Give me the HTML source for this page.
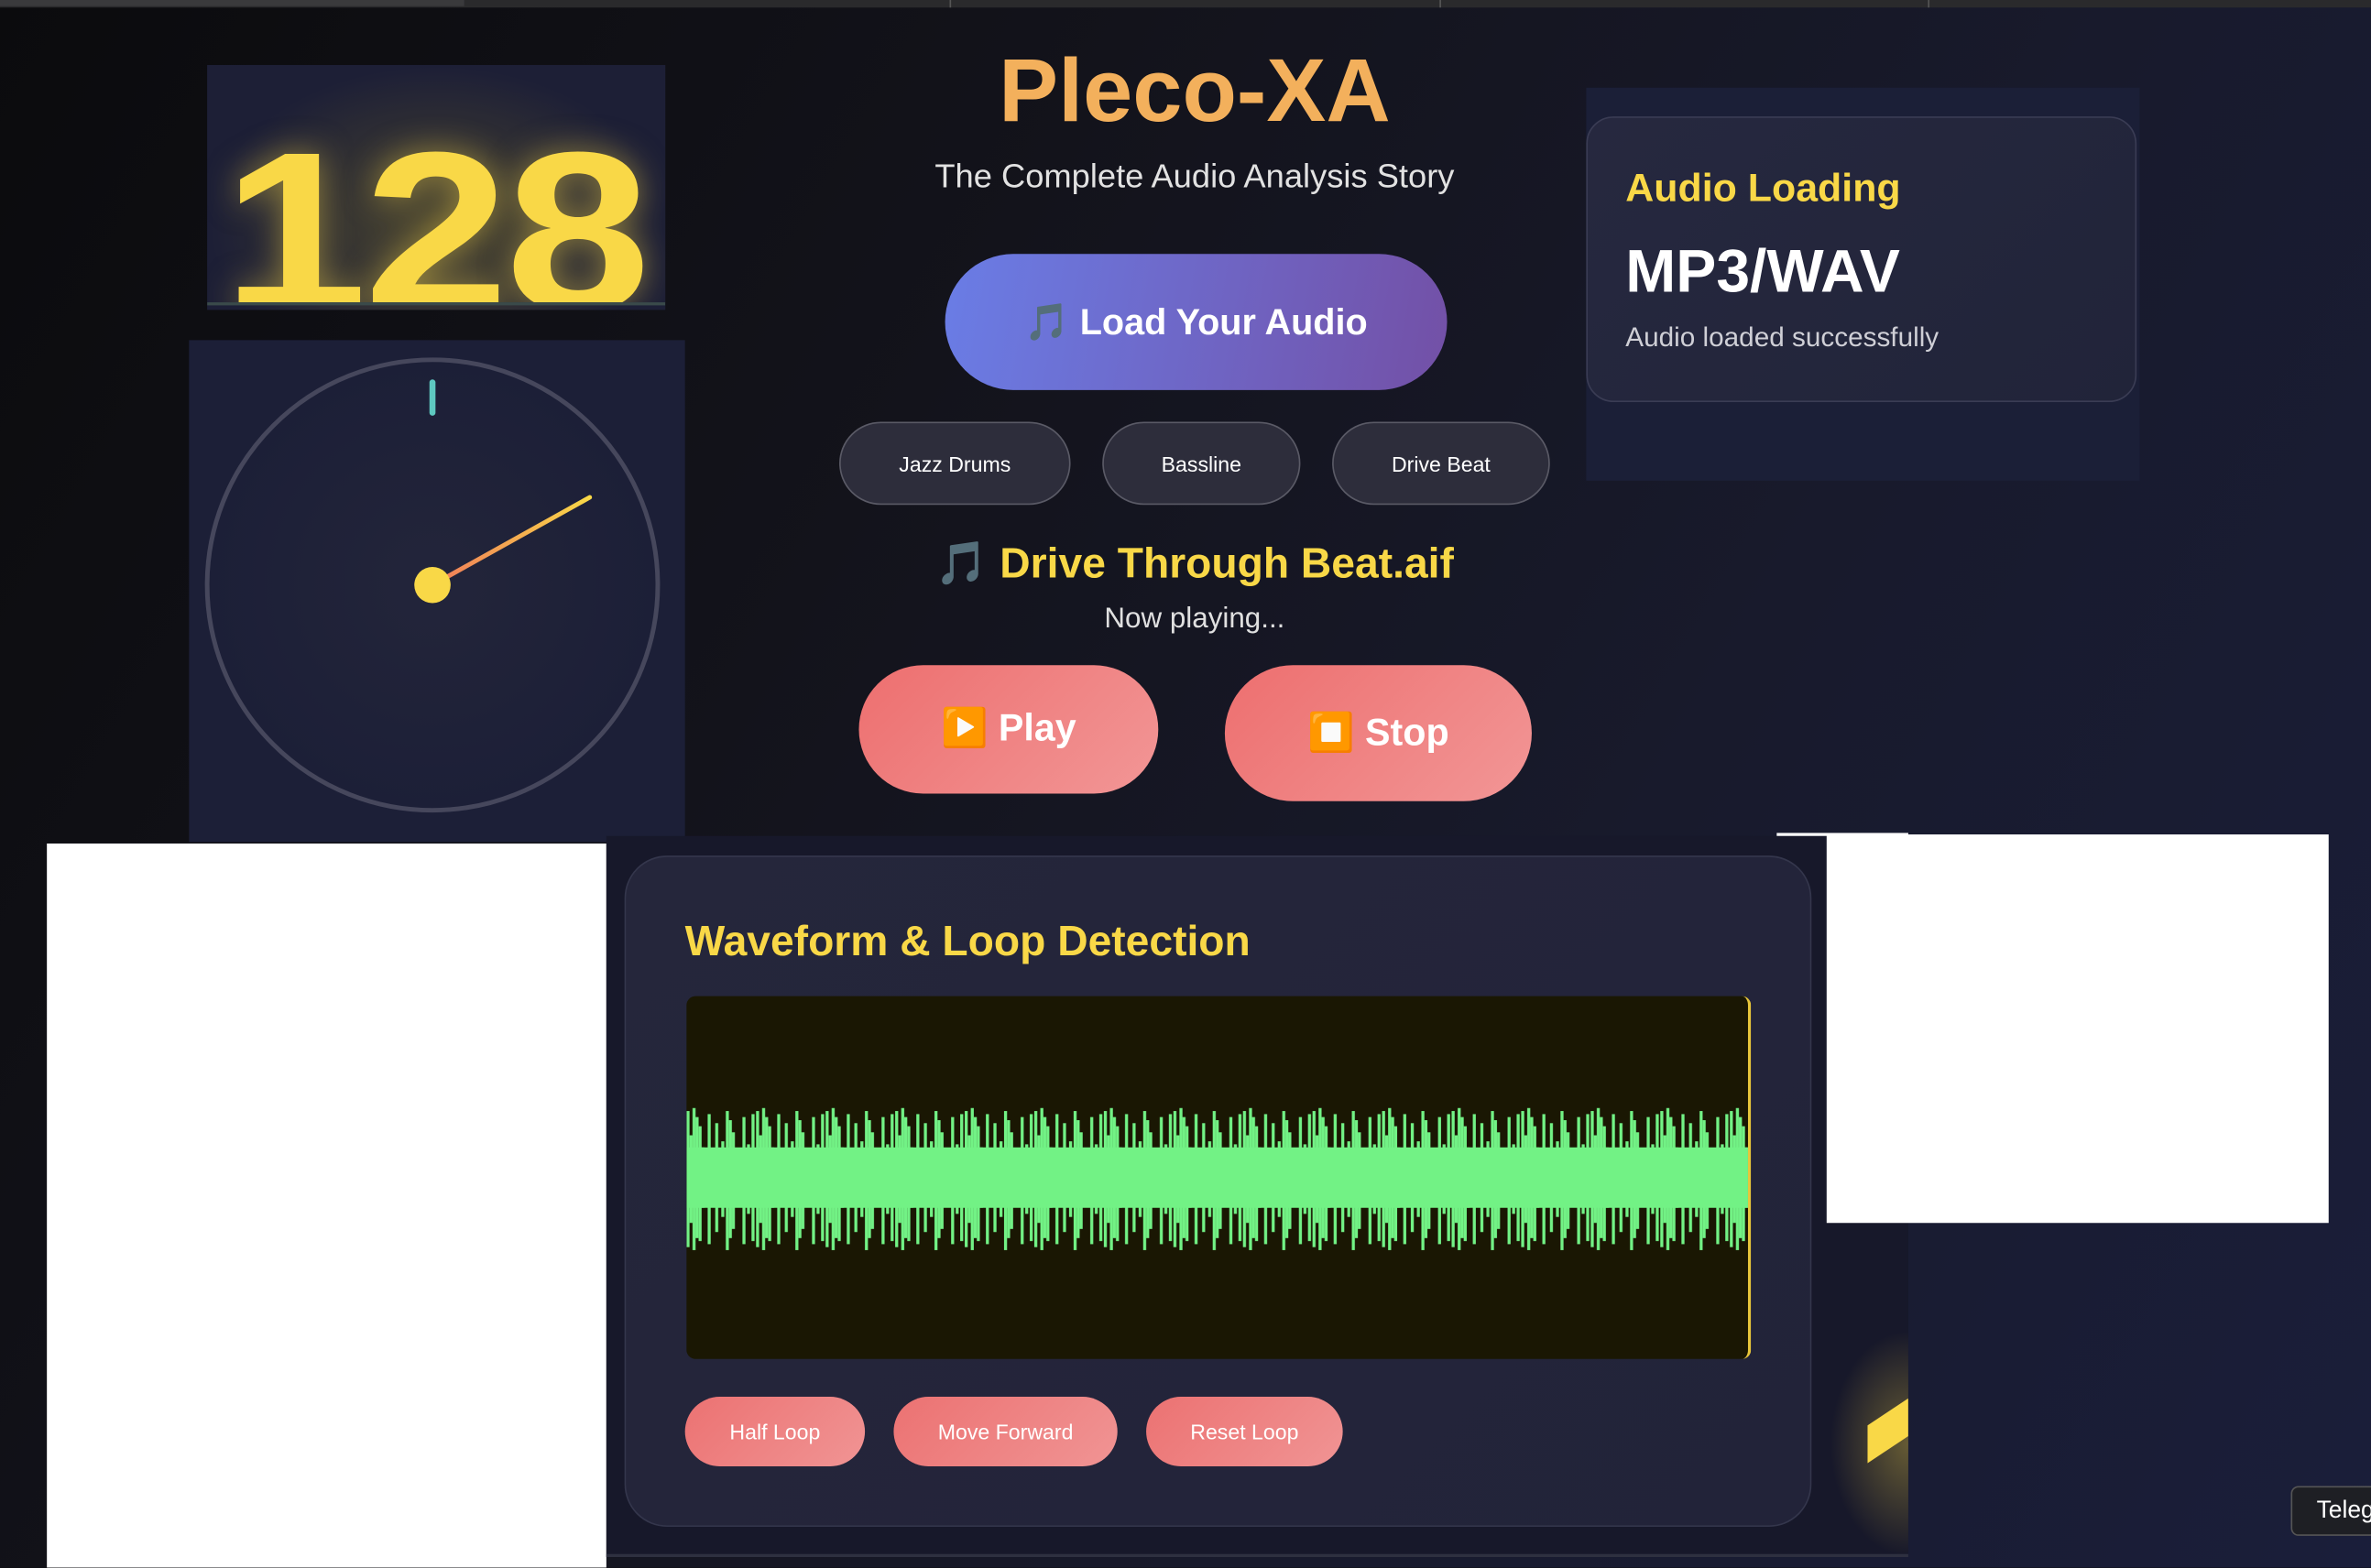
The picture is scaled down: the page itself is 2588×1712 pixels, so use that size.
<!DOCTYPE html>
<html><head><meta charset="utf-8"><style>
html,body{margin:0;padding:0;width:2588px;height:1712px;overflow:hidden;background:#0d0d10;}
#s{position:absolute;left:0;top:0;width:1568px;height:1037px;transform:scale(1.6505);transform-origin:0 0;
background:linear-gradient(120deg,#0b0b0d 0%,#13131b 35%,#181a2c 65%,#1a1e3a 100%);font-family:"Liberation Sans",sans-serif;overflow:hidden;}
.a{position:absolute;}
.c{text-align:center;}
.pb{position:absolute;top:279px;height:53px;border:1.5px solid #5a5a66;border-radius:28px;background:#2d2d3b;color:#fff;font-size:14px;display:flex;align-items:center;justify-content:center;}
.rb{position:absolute;border-radius:50px;background:linear-gradient(135deg,#ed6f6f,#f29696);color:#fff;font-weight:bold;display:flex;align-items:center;justify-content:center;}
.lb{position:absolute;top:924px;height:46px;border-radius:23px;background:linear-gradient(135deg,#ec7272,#f09494);color:#fff;font-size:14px;display:flex;align-items:center;justify-content:center;}
</style></head><body><div id="s">
<div class="a" style="left:0;top:0;width:1568px;height:5px;background:#2a2a2c"></div>
<div class="a" style="left:0;top:0;width:307px;height:4px;background:#3a3a3c"></div>
<div class="a" style="left:628px;top:0;width:1px;height:5px;background:#555"></div>
<div class="a" style="left:952px;top:0;width:1px;height:5px;background:#555"></div>
<div class="a" style="left:1275px;top:0;width:1px;height:5px;background:#555"></div>

<div class="a" style="left:137px;top:43px;width:303px;height:162px;background:radial-gradient(ellipse at 50% 65%,#4a4530 0%,#1d1f36 70%);overflow:hidden">
<div class="a" style="left:0;top:0;width:303px;height:157px;overflow:hidden">
<div class="a" style="left:10px;top:35px;font-size:150px;font-weight:bold;color:#f9d847;letter-spacing:-2px;line-height:1;text-shadow:0 0 20px rgba(249,216,71,.5);transform:scaleX(1.15);transform-origin:0 0">128</div>
</div>
<div class="a" style="left:0;top:157px;width:303px;height:2px;background:#3a4a4a"></div>
</div>

<div class="a" style="left:125px;top:225px;width:328px;height:332px;background:#1c1f37">
<svg width="328" height="332" style="position:absolute;left:0;top:0">
<defs><linearGradient id="g" x1="0" y1="1" x2="1" y2="0"><stop offset="0" stop-color="#f07a5a"/><stop offset="1" stop-color="#f9d847"/></linearGradient>
<radialGradient id="rg"><stop offset="0" stop-color="#23253a"/><stop offset="1" stop-color="#1c1f37"/></radialGradient></defs>
<circle cx="161" cy="162" r="149" fill="url(#rg)" stroke="#46475c" stroke-width="3"/>
<line x1="161" y1="28" x2="161" y2="48" stroke="#5ec8c0" stroke-width="4" stroke-linecap="round"/>
<line x1="161" y1="162" x2="265" y2="104" stroke="url(#g)" stroke-width="3" stroke-linecap="round"/>
<circle cx="161" cy="162" r="12" fill="#f9d847"/>
</svg></div>

<div class="a c" style="left:540px;top:26px;width:500px;font-size:59px;font-weight:bold;color:#f3b05c">Pleco-XA</div>
<div class="a c" style="left:540px;top:104px;width:500px;font-size:22px;color:#e2e2e2">The Complete Audio Analysis Story</div>
<div class="a" style="left:625px;top:168px;width:332px;height:90px;border-radius:45px;background:linear-gradient(100deg,#6a7de6,#7350a6);color:#fff;font-size:24px;font-weight:bold;display:flex;align-items:center;justify-content:center">🎵 Load Your Audio</div>
<div class="pb" style="left:555px;width:151px">Jazz Drums</div>
<div class="pb" style="left:729px;width:129px">Bassline</div>
<div class="pb" style="left:881px;width:142px">Drive Beat</div>
<div class="a c" style="left:490px;top:356px;width:600px;font-size:28px;font-weight:bold;color:#f9d847">🎵 Drive Through Beat.aif</div>
<div class="a c" style="left:590px;top:399px;width:400px;font-size:19px;color:#e0e0e0">Now playing...</div>
<div class="rb" style="left:568px;top:440px;width:198px;height:85px;font-size:25px">▶️ Play</div>
<div class="rb" style="left:810px;top:440px;width:203px;height:90px;font-size:25px">⏹️ Stop</div>

<div class="a" style="left:1049px;top:58px;width:366px;height:260px;background:#1b1f37"></div>
<div class="a" style="left:1049px;top:77px;width:362px;height:187px;border-radius:18px;background:linear-gradient(135deg,#26283f,#212439);border:1px solid #3a3c54">
<div class="a" style="left:25px;top:31px;font-size:26px;font-weight:bold;color:#f9d847">Audio Loading</div>
<div class="a" style="left:25px;top:80px;font-size:40px;font-weight:bold;color:#fff">MP3/WAV</div>
<div class="a" style="left:25px;top:135px;font-size:18px;color:#cfcfd6">Audio loaded successfully</div>
</div>

<div class="a" style="left:31px;top:558px;width:370px;height:479px;background:#fff"></div>

<div class="a" style="left:401px;top:553px;width:861px;height:477px;background:#17182a"></div>
<div class="a" style="left:1210px;top:880px;width:52px;height:150px;background:radial-gradient(ellipse at 100% 50%,rgba(249,216,71,.35),rgba(0,0,0,0) 70%)"></div>
<div class="a" style="left:1235px;top:925px;width:27px;height:43px;background:#f9d847;clip-path:polygon(27px 0,27px 25px,0 43px,0 18px)"></div>
<div class="a" style="left:1208px;top:552px;width:332px;height:257px;background:#fff"></div>
<div class="a" style="left:1175px;top:551px;width:87px;height:2px;background:#fff"></div>
<div class="a" style="left:413px;top:566px;width:783px;height:442px;border-radius:28px;background:linear-gradient(135deg,#25263b,#222339);border:1.5px solid #34364c">
<div class="a" style="left:39px;top:40px;font-size:28px;font-weight:bold;color:#f9d847">Waveform &amp; Loop Detection</div>
<div class="a" style="left:40px;top:92px;width:702px;height:240px;background:#1a1703;border-radius:6px;border-right:2px solid #e8c63a;overflow:hidden">
<svg width="702" height="240" style="position:absolute;left:0;top:0">
<defs><pattern id="w" x="0" y="0" width="46" height="240" patternUnits="userSpaceOnUse">
<g stroke="#72f285" stroke-width="2">
<line x1="1" y1="76" x2="1" y2="166"/><line x1="3" y1="92" x2="3" y2="150"/><line x1="5" y1="74" x2="5" y2="168"/>
<line x1="7" y1="80" x2="7" y2="160"/><line x1="9" y1="86" x2="9" y2="162"/><line x1="11" y1="100" x2="11" y2="140"/>
<line x1="15" y1="78" x2="15" y2="164"/><line x1="17" y1="104" x2="17" y2="136"/><line x1="20" y1="84" x2="20" y2="156"/>
<line x1="24" y1="96" x2="24" y2="146"/><line x1="27" y1="76" x2="27" y2="168"/><line x1="29" y1="82" x2="29" y2="160"/>
<line x1="31" y1="90" x2="31" y2="154"/><line x1="35" y1="104" x2="35" y2="138"/><line x1="38" y1="80" x2="38" y2="164"/>
<line x1="41" y1="98" x2="41" y2="144"/><line x1="44" y1="78" x2="44" y2="162"/></g></pattern></defs>
<rect x="0" y="0" width="702" height="240" fill="url(#w)"/>
<path d="M0 100 L702 100 L702 140 L0 140Z" fill="#72f285"/>
</svg></div>
</div>
<div class="lb" style="left:453px;width:119px">Half Loop</div>
<div class="lb" style="left:591px;width:148px">Move Forward</div>
<div class="lb" style="left:758px;width:130px">Reset Loop</div>
<div class="a" style="left:401px;top:1028px;width:861px;height:2px;background:#2e3040"></div>

<div class="a" style="left:1515px;top:983px;width:60px;height:31px;background:#1e1f24;border:1.5px solid #555;border-radius:5px;color:#fff;font-size:16px;line-height:31px;padding-left:16px">Teleg</div>
</div></body></html>
